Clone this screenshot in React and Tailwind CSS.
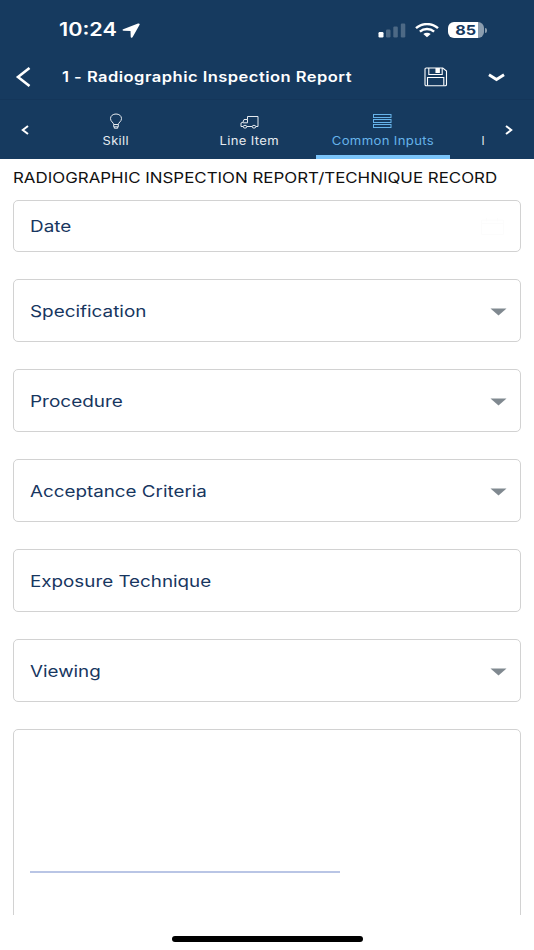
const FONT = "font-['Inter','Liberation_Sans',sans-serif]";

const TABS = [
  { label: 'Skill', icon: BulbIcon, scale: 'scale-x-[1.12]' },
  { label: 'Line Item', icon: TruckIcon, scale: 'scale-x-[1.135]' },
  { label: 'Common Inputs', icon: RowsIcon, scale: 'scale-x-[1.14]', active: true },
];

const FIELDS = [
  { label: 'Specification', select: true, scale: 'scale-x-[1.18]' },
  { label: 'Procedure', select: true, scale: 'scale-x-[1.185]' },
  { label: 'Acceptance Criteria', select: true, scale: 'scale-x-[1.175]' },
  { label: 'Exposure Technique', select: false, scale: 'scale-x-[1.175]' },
  { label: 'Viewing', select: true, scale: 'scale-x-[1.175]' },
];

function BulbIcon() {
  return (
    <svg width="14" height="17" viewBox="0 0 14 17" fill="none" stroke="currentColor" strokeWidth="1">
      <path d="M4.7 11.500C4.700 9.600 1.500 8.600 1.500 5.600 1.500 2.800 3.900 1 7 1s5.500 1.800 5.500 4.600c0 3-3.200 4-3.200 5.900z" />
      <path d="M4.700 11.500v2.300h4.600v-2.300M5.300 14v1.200h3.400V14" />
    </svg>
  );
}

function TruckIcon() {
  return (
    <svg width="19" height="14" viewBox="0 0 19 14" fill="none" stroke="currentColor" strokeWidth="1">
      <path d="M3.200 11.500H1V8l2-.8 1-2.700h3.500V1.500h10.500v10h-2M6.800 11.500h5.400M7.500 4.500v3.300H3" />
      <ellipse cx="5" cy="11.700" rx="1.800" ry="1.400" />
      <ellipse cx="14" cy="11.700" rx="1.800" ry="1.400" />
    </svg>
  );
}

function RowsIcon() {
  return (
    <svg width="19" height="15" viewBox="0 0 19 15" fill="none" stroke="currentColor" strokeWidth="1">
      <rect x="0.500" y="0.500" width="17.500" height="3" />
      <rect x="0.500" y="5.500" width="17.500" height="3" />
      <rect x="0.500" y="10.500" width="17.500" height="3" />
    </svg>
  );
}

function StatusBar() {
  return (
    <div className="flex h-[55px] items-center pl-[59px] pr-[47px] pt-[5px]">
      <span className="w-[63px] text-[18px] font-semibold leading-6">
        <span className="inline-block origin-left scale-x-[1.2]">10:24</span>
      </span>
      <svg width="18" height="15" viewBox="0 0 18 15" fill="currentColor">
        <path d="M16 .6 1.200 6.200C.2 6.600.4 7.800 1.500 7.800l7 .2.200 5.700c0 1.200 1.500 1.400 2 .3L17.600 1.800C18 .8 17.200.2 16 .6z" />
      </svg>
      <div className="ml-auto flex items-center">
        <svg width="28" height="15" viewBox="0 0 28 15" fill="currentColor">
          <rect x="0.500" y="9" width="5" height="5.500" rx="1.200" />
          <rect x="8" y="6.500" width="4.500" height="8" rx="1.200" opacity="0.240" />
          <rect x="15.300" y="3.500" width="4.500" height="11" rx="1.200" opacity="0.240" />
          <rect x="22.800" y="0.500" width="4.500" height="14" rx="1.200" opacity="0.240" />
        </svg>
        <svg className="ml-[9px]" width="24" height="15" viewBox="0 0 24 15" fill="none" stroke="currentColor" strokeWidth="2.400">
          <path d="M1 5.200C7-.3 17-.3 23 5.200" />
          <path d="M4.900 8.700c4-3.600 10.200-3.600 14.200 0" />
          <path d="M8.300 11c2.200-1.700 5.200-1.700 7.400 0L12 14.300z" fill="currentColor" stroke="none" />
        </svg>
        <div className="ml-[9px] flex items-center">
          <div className="flex h-4 w-[36px] items-center justify-center rounded-[6px] bg-linear-to-r from-white from-84% to-[#8b9daf] to-84% text-[13.500px] font-bold leading-4 text-[#163a5f]">
            <span className="inline-block scale-x-[1.2]">85</span>
          </div>
          <span className="ml-px h-[5px] w-[2px] rounded-r bg-[#8b9daf]" />
        </div>
      </div>
    </div>
  );
}

function TitleBar() {
  return (
    <div className="flex h-[45px] items-center border-b border-[#14365a] pl-[15px] pr-[29px]">
      <svg width="16" height="20" viewBox="0 0 16 20" fill="none" stroke="currentColor" strokeWidth="2.600">
        <path d="M14.500 1 3 10 14.500 19" />
      </svg>
      <h1 className="ml-[31px] whitespace-nowrap text-[14px] font-semibold leading-5">
        <span className="inline-block origin-left scale-x-[1.18] tracking-[0.4px]">1 - Radiographic Inspection Report</span>
      </h1>
      <svg className="ml-auto" width="24" height="20" viewBox="0 0 24 20" fill="none" stroke="currentColor" strokeWidth="1.100">
        <path d="M2.200 1h16.600l3.700 3v13.500c0 .8-.5 1.300-1.300 1.300H2.200c-.7 0-1.200-.5-1.200-1.200V2.200C1 1.500 1.500 1 2.200 1z" />
        <path d="M4.800 1v6.500h13.400V1M3.500 18.500v-8h16.300v8" />
        <path d="M12 1.500h3.300v4H12z" fill="currentColor" />
      </svg>
      <svg className="ml-[40px]" width="17" height="9" viewBox="0 0 17 9" fill="none" stroke="currentColor" strokeWidth="2.800">
        <path d="m1 1.800 7.500 4.700L16 1.800" />
      </svg>
    </div>
  );
}

function TabBar() {
  return (
    <nav className="flex h-[59px]">
      <button className="flex w-[49px] shrink-0 items-center justify-center pl-px">
        <svg width="8" height="10" viewBox="0 0 8 10" fill="none" stroke="currentColor" strokeWidth="2">
          <path d="M7 1 1.800 5 7 9" />
        </svg>
      </button>
      <div className="flex min-w-0 flex-1 overflow-hidden">
        {TABS.map((tab) => (
          <button
            key={tab.label}
            className={`flex w-[133.500px] shrink-0 flex-col items-center border-b-4 text-[11.500px] leading-4 ${
              tab.active ? 'border-[#79c4fb] text-[#66b3ea]' : 'border-transparent text-[#e6ebf0]'
            }`}
          >
            <span className="flex h-[33px] items-center pt-[10px]">
              <tab.icon />
            </span>
            <span className={`inline-block whitespace-nowrap tracking-[0.3px] ${tab.scale}`}>{tab.label}</span>
          </button>
        ))}
        <span className="ml-[32px] w-[3px] shrink-0 overflow-hidden pt-[33px] text-[11.500px] leading-4 text-[#e6ebf0]">I</span>
      </div>
      <button className="flex w-[49px] shrink-0 items-center justify-center pr-[2px]">
        <svg width="8" height="10" viewBox="0 0 8 10" fill="none" stroke="currentColor" strokeWidth="2">
          <path d="m1 1 5.200 4L1 9" />
        </svg>
      </button>
    </nav>
  );
}

function Field({ label, select, scale }) {
  return (
    <div className="flex h-[63px] items-center justify-between rounded-[5px] border border-[#d2d2d2] pl-[16px] pr-[13px] text-[16px] text-[#17365f]">
      <span className={`inline-block origin-left ${scale}`}>{label}</span>
      {select && (
        <svg className="mt-[2px]" width="17" height="8" viewBox="0 0 17 8" fill="#808990">
          <path d="M.5.500h16L8.500 7.500z" />
        </svg>
      )}
    </div>
  );
}

export default function App() {
  return (
    <div className={`flex h-[950px] w-[534px] flex-col overflow-hidden bg-white ${FONT}`}>
      <header className="bg-[#163a5f] text-white">
        <StatusBar />
        <TitleBar />
        <TabBar />
      </header>

      <main className="flex h-[756px] flex-col overflow-hidden px-[13px]">
        <h2 className="h-[41px] shrink-0 whitespace-nowrap pt-2 text-[14.500px] leading-[22px] text-[#111]">
          <span className="inline-block origin-left scale-x-[1.165]">RADIOGRAPHIC INSPECTION REPORT/TECHNIQUE RECORD</span>
        </h2>

        <div className="flex h-[52px] shrink-0 items-center justify-between rounded-[5px] border border-[#d2d2d2] pl-[16px] pr-4 text-[16px] text-[#17365f]">
          <span className="inline-block origin-left scale-x-[1.18]">Date</span>
          <svg width="23" height="18" viewBox="0 0 23 18" fill="none" stroke="#fcfcfc">
            <path d="M.500 3h22v14.500H.500zM.500 6.500h22M5.500 1v3.500M16.500 1v3.500" />
          </svg>
        </div>

        <div className="mt-[27px] flex shrink-0 flex-col gap-[27px]">
          {FIELDS.map((field) => (
            <Field key={field.label} {...field} />
          ))}

          {/* Signature box, runs past the bottom of the scroll area */}
          <div className="h-[220px] rounded-[5px] border border-[#d2d2d2] px-[16px] pt-[141px]">
            <div className="h-[2px] w-[310px] bg-[#b9c5e5]" />
          </div>
        </div>
      </main>

      <div className="flex flex-1 justify-center pt-[21px]">
        <div className="h-[6px] w-[191px] rounded-full bg-black" />
      </div>
    </div>
  );
}
